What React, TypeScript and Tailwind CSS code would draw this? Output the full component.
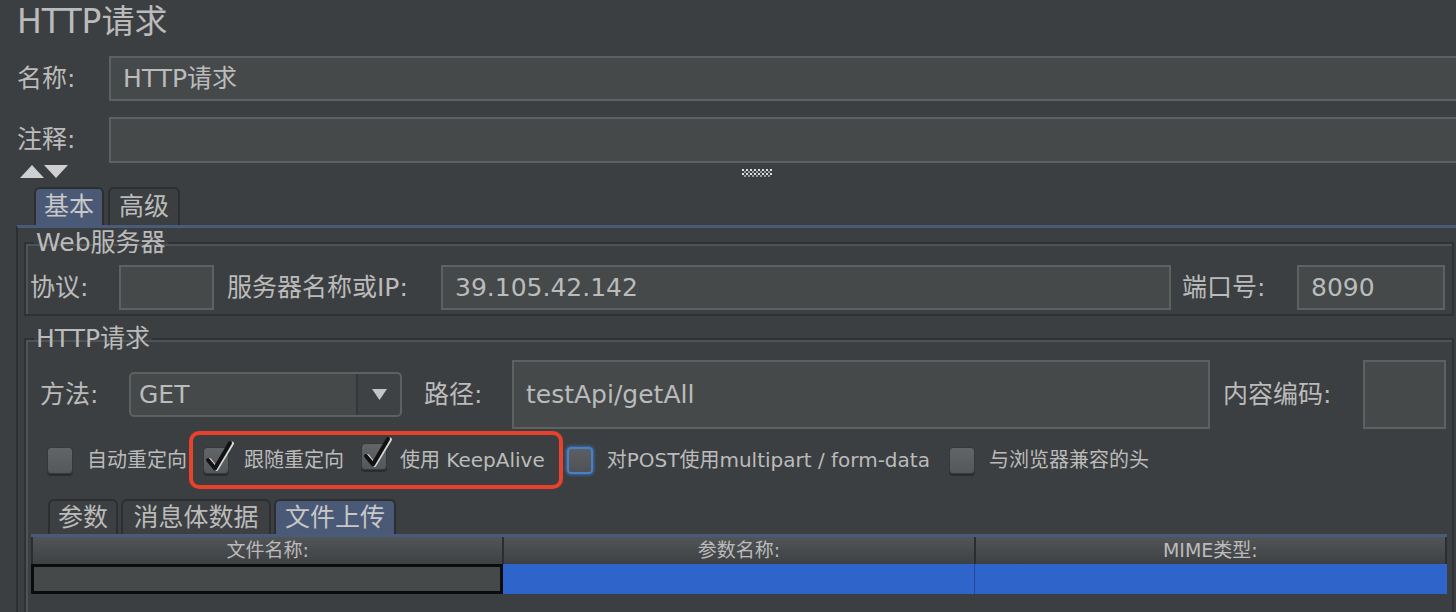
import React from 'react';

const Tri = ({ down }: { down?: boolean }) => (
  <svg width="24" height="13" viewBox="0 0 24 13">
    <polygon points={down ? '0,0 24,0 12,13' : '12,0 24,13 0,13'} fill="#cfcfcf" />
  </svg>
);

const Grip = () => {
  const cells: React.ReactElement[] = [];
  for (let r = 0; r < 4; r++) {
    for (let c = 0; c < 15; c++) {
      if ((r + c) % 2 === 0) cells.push(<rect key={r + '-' + c} x={c * 2} y={r * 2} width="2" height="2" fill={r % 2 ? '#9a9a9a' : '#e0e0e0'} />);
    }
  }
  return (
    <svg width="30" height="8" viewBox="0 0 30 8">
      {cells}
    </svg>
  );
};

const Field = ({ children, className }: { children?: React.ReactNode; className: string }) => (
  <div className={className}>{children}</div>
);

const Box = ({ checked, focus }: { checked?: boolean; focus?: boolean }) => (
  <span className="relative inline-block w-[26px] h-[27px] shrink-0">
    <span
      className={
        focus
          ? 'absolute inset-0 rounded-[4px] bg-[linear-gradient(#5c5f61,#505355)] border-2 border-[#4a7fc4] shadow-[0_0_3px_1px_#3b6fb0]'
          : 'absolute inset-0 rounded-[4px] bg-[linear-gradient(#626567,#55585a)] border border-[#36383a] shadow-[0_2px_0_#2a2c2d]'
      }
    />
    {checked && (
      <svg className="absolute left-[1px] top-[-8px]" width="32" height="36" viewBox="0 0 32 36">
        <path d="M5.5 21 L12.5 30 L28 4.5" fill="none" stroke="#d8d8d8" strokeWidth="4" strokeLinecap="round" strokeLinejoin="round" />
        <path d="M4 21 L11 29.5 L26 4" fill="none" stroke="#121212" strokeWidth="4" strokeLinecap="round" strokeLinejoin="round" />
      </svg>
    )}
  </span>
);

export default function App() {
  return (
    <div className="w-[1456px] h-[612px] overflow-hidden bg-[#3c3f41] text-[#bbbbbb] font-[family-name:DejaVu_Sans,Noto_Sans_CJK_SC,sans-serif]">
      {/* Title */}
      <div className="h-[56px] pl-[17px] pt-[3px] text-[33px] leading-[38px]">HTTP请求</div>

      {/* Name */}
      <div className="flex items-center pl-[17px] mr-[-20px]">
        <div className="w-[92px] text-[25px]">名称:</div>
        <Field className="flex-1 h-[45px] bg-[#45494a] border-2 border-[#5e6162] flex items-center pl-[12px] text-[25px]">HTTP请求</Field>
      </div>

      {/* Comment */}
      <div className="flex items-center pl-[17px] mr-[-20px] mt-[16px]">
        <div className="w-[92px] text-[25px]">注释:</div>
        <Field className="flex-1 h-[46px] bg-[#45494a] border-2 border-[#5e6162]" />
      </div>

      {/* arrows + grip */}
      <div className="h-[24px] flex items-start pl-[20px] pt-[2px]">
        <Tri />
        <Tri down />
        <div className="ml-[674px] mt-[4px]">
          <Grip />
        </div>
      </div>

      {/* Top tabs */}
      <div className="flex items-end gap-[4px] pl-[34px] h-[38px]">
        <div className="h-[38px] w-[70px] bg-[#4a5a76] rounded-t-[6px] border-2 border-b-0 border-[#2c2e30] flex items-center justify-center text-[25px] text-[#c8c8c8]">基本</div>
        <div className="h-[38px] w-[72px] bg-[#3c3f41] rounded-t-[6px] border-2 border-b-0 border-[#2c2e30] flex items-center justify-center text-[25px]">高级</div>
      </div>

      {/* Panel */}
      <div className="ml-[16px] border-t-[3px] border-t-[#4a5b79] border-l-2 border-l-[#2c2e30] pl-[6px] pr-[2px] h-[400px]">
        {/* Web server */}
        <fieldset className="mt-[2px] border-2 border-[#2f3133] shadow-[inset_2px_2px_0_#505355]">
          <legend className="ml-[8px] px-[2px] text-[25px] leading-[26px]">Web服务器</legend>
          <div className="flex items-center pl-[4px] pr-[7px] pt-[9px] pb-[4px] text-[25px]">
            <div className="w-[89px] shrink-0">协议:</div>
            <Field className="w-[95px] shrink-0 h-[45px] bg-[#45494a] border-2 border-[#5e6162]" />
            <div className="ml-[13px] w-[214px] shrink-0">服务器名称或IP:</div>
            <Field className="flex-1 h-[45px] bg-[#45494a] border-2 border-[#5e6162] flex items-center pl-[12px]">39.105.42.142</Field>
            <div className="ml-[11px] w-[115px] shrink-0">端口号:</div>
            <Field className="w-[148px] shrink-0 h-[45px] bg-[#45494a] border-2 border-[#5e6162] flex items-center pl-[12px]">8090</Field>
          </div>
        </fieldset>

        {/* HTTP request */}
        <fieldset className="mt-[10px] border-2 border-[#2f3133] shadow-[inset_2px_2px_0_#505355] h-[300px]">
          <legend className="ml-[8px] px-[2px] text-[25px] leading-[26px]">HTTP请求</legend>
          <div className="flex items-center pl-[14px] pr-[6px] pt-[8px] text-[25px]">
            <div className="w-[89px] shrink-0">方法:</div>
            <div className="w-[273px] shrink-0 h-[45px] rounded-[5px] bg-[#45494a] border-2 border-[#5e6162] flex items-stretch">
              <div className="flex-1 flex items-center pl-[8px]">GET</div>
              <div className="w-[44px] border-l-2 border-[#35383a] bg-[#3f4244] rounded-r-[4px] flex items-center justify-center">
                <svg width="15" height="11" viewBox="0 0 15 11">
                  <polygon points="0,0 15,0 7.5,11" fill="#c4c4c4" />
                </svg>
              </div>
            </div>
            <div className="ml-[22px] w-[88px] shrink-0">路径:</div>
            <Field className="flex-1 h-[69px] bg-[#45494a] border-2 border-[#5e6162] flex items-center pl-[12px]">testApi/getAll</Field>
            <div className="ml-[13px] w-[140px] shrink-0">内容编码:</div>
            <Field className="w-[83px] shrink-0 h-[69px] bg-[#45494a] border-2 border-[#5e6162]" />
          </div>

          {/* checkboxes */}
          <div className="flex items-center mt-[2px] text-[20px]">
            <div className="flex items-center ml-[21px]">
              <Box />
              <span className="ml-[14px]">自动重定向</span>
            </div>
            <div className="ml-[2px] h-[58px] border-[4px] border-[#e8412c] rounded-[10px] flex items-center pl-[10px] pr-[14px]">
              <Box checked />
              <span className="ml-[15px]">跟随重定向</span>
              <span className="ml-[17px]"><Box checked /></span>
              <span className="ml-[13px]">使用 KeepAlive</span>
            </div>
            <div className="flex items-center ml-[4px]">
              <Box focus />
              <span className="ml-[14px]">对POST使用multipart / form-data</span>
            </div>
            <div className="flex items-center ml-[19px]">
              <Box />
              <span className="ml-[14px]">与浏览器兼容的头</span>
            </div>
          </div>

          {/* sub tabs */}
          <div className="flex items-end gap-[3px] ml-[22px] mt-[10px] h-[35px] text-[25px]">
            <div className="h-[35px] w-[70px] rounded-t-[6px] border-2 border-b-0 border-[#2c2e30] bg-[#3d4042] flex items-center justify-center">参数</div>
            <div className="h-[35px] w-[150px] rounded-t-[6px] border-2 border-b-0 border-[#2c2e30] bg-[#3d4042] flex items-center justify-center">消息体数据</div>
            <div className="h-[35px] w-[122px] rounded-t-[6px] border-2 border-b-0 border-[#2c2e30] bg-[#4a5a76] flex items-center justify-center text-[#c8c8c8]">文件上传</div>
          </div>

          {/* table */}
          <div className="ml-[5px] mr-[5px] border-t-[3px] border-[#4a5b79]">
            <div className="grid grid-cols-3 h-[27px] bg-[linear-gradient(#515557,#3e4143)] text-[19px] leading-[27px] text-center border-l-2 border-[#2b2d2f]">
              <div className="border-r-2 border-[#2b2d2f]">文件名称:</div>
              <div className="border-r-2 border-[#2b2d2f]">参数名称:</div>
              <div className="border-r-2 border-[#2b2d2f]">MIME类型:</div>
            </div>
            <div className="grid grid-cols-3 h-[30px]">
              <div className="bg-[#45494a] border-[3px] border-[#0c0c0c]" />
              <div className="bg-[#2f65ca] border-r border-[#23479a]" />
              <div className="bg-[#2f65ca]" />
            </div>
          </div>
        </fieldset>
      </div>
    </div>
  );
}
